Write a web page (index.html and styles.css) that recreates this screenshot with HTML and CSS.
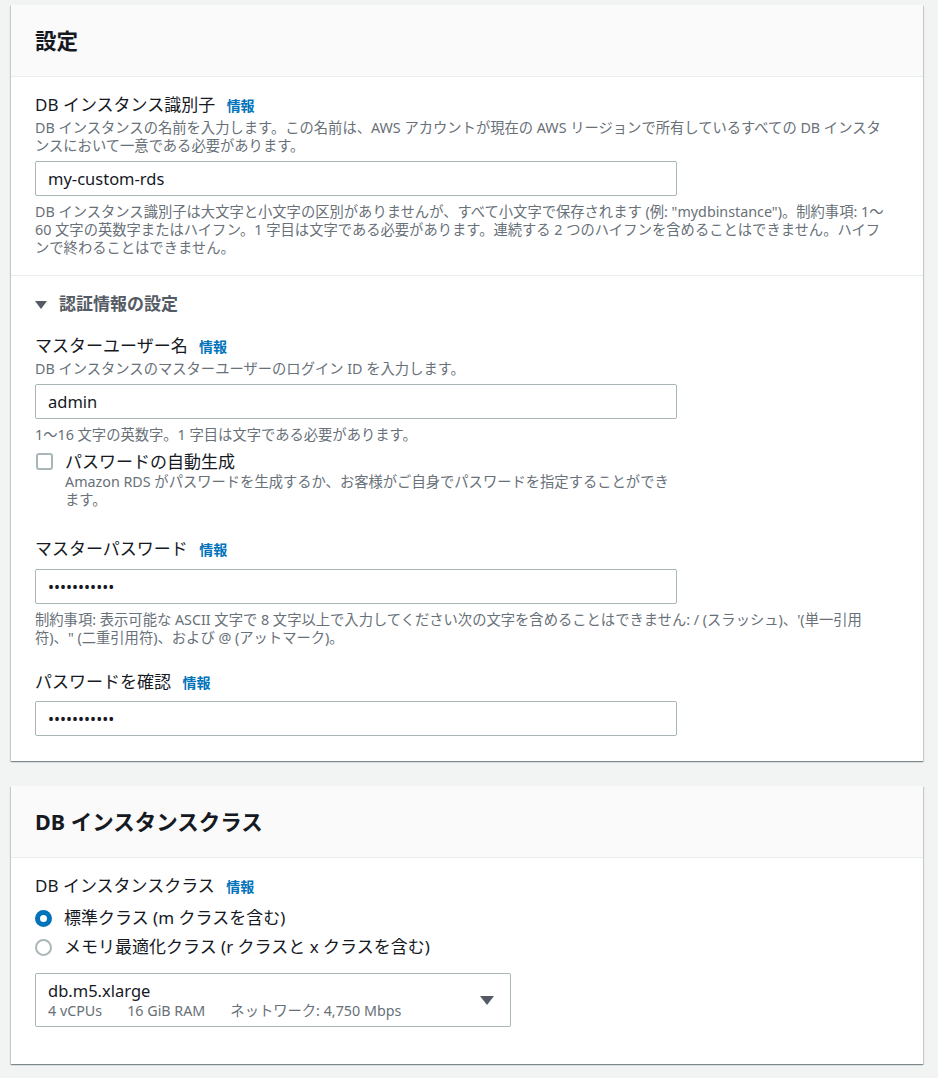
FILE: index.html
```html
<!DOCTYPE html>
<html lang="ja">
<head>
<meta charset="utf-8">
<title>設定</title>
<link rel="stylesheet" href="styles.css">
</head>
<body>
<main class="page">

  <section class="card">
    <header class="card-header">
      <h2 class="card-title">設定</h2>
    </header>

    <div class="card-section">
      <div class="field">
        <div class="field-label">DB インスタンス識別子 <a class="info" href="#">情報</a></div>
        <p class="field-desc">DB インスタンスの名前を入力します。この名前は、AWS アカウントが現在の AWS リージョンで所有しているすべての DB インスタ<br>ンスにおいて一意である必要があります。</p>
        <input class="text-input" type="text" value="my-custom-rds">
        <p class="field-hint">DB インスタンス識別子は大文字と小文字の区別がありませんが、すべて小文字で保存されます (例: "mydbinstance")。制約事項: 1～<br>60 文字の英数字またはハイフン。1 字目は文字である必要があります。連続する 2 つのハイフンを含めることはできません。ハイフ<br>ンで終わることはできません。</p>
      </div>
    </div>

    <div class="card-section card-section--last">
      <div class="expander">
        <span class="caret-down"></span>
        <span class="expander-title">認証情報の設定</span>
      </div>

      <div class="field field--first">
        <div class="field-label">マスターユーザー名 <a class="info" href="#">情報</a></div>
        <p class="field-desc">DB インスタンスのマスターユーザーのログイン ID を入力します。</p>
        <input class="text-input" type="text" value="admin">
        <p class="field-hint">1～16 文字の英数字。1 字目は文字である必要があります。</p>
        <label class="checkbox">
          <span class="checkbox-box"></span>
          <span class="checkbox-text">
            <span class="checkbox-label">パスワードの自動生成</span>
            <span class="checkbox-desc">Amazon RDS がパスワードを生成するか、お客様がご自身でパスワードを指定することができ<br>ます。</span>
          </span>
        </label>
      </div>

      <div class="field field--after-check">
        <div class="field-label">マスターパスワード <a class="info" href="#">情報</a></div>
        <input class="text-input text-input--secret" type="password" value="Passw0rd123">
        <p class="field-hint">制約事項: 表示可能な ASCII 文字で 8 文字以上で入力してください次の文字を含めることはできません: / (スラッシュ)、'(単一引用<br>符)、" (二重引用符)、および @ (アットマーク)。</p>
      </div>

      <div class="field field--spaced">
        <div class="field-label">パスワードを確認 <a class="info" href="#">情報</a></div>
        <input class="text-input text-input--secret text-input--tight" type="password" value="Passw0rd123">
      </div>
    </div>
  </section>

  <section class="card card--second">
    <header class="card-header">
      <h2 class="card-title">DB インスタンスクラス</h2>
    </header>

    <div class="card-section card-section--class">
      <div class="field-label">DB インスタンスクラス <a class="info" href="#">情報</a></div>
      <div class="radio-group">
        <label class="radio">
          <span class="radio-dot radio-dot--on"></span>
          <span class="radio-label">標準クラス (m クラスを含む)</span>
        </label>
        <label class="radio">
          <span class="radio-dot"></span>
          <span class="radio-label">メモリ最適化クラス (r クラスと x クラスを含む)</span>
        </label>
      </div>

      <div class="select">
        <div class="select-value">
          <div class="select-main">db.m5.xlarge</div>
          <div class="select-tags">
            <span>4 vCPUs</span>
            <span>16 GiB RAM</span>
            <span>ネットワーク: 4,750 Mbps</span>
          </div>
        </div>
        <span class="select-caret"></span>
      </div>
    </div>
  </section>

</main>
</body>
</html>
```
FILE: styles.css
```css
* {
  box-sizing: border-box;
}

html, body {
  margin: 0;
  background: #f2f3f3;
}

body {
  font-family: "Noto Sans", "Noto Sans CJK JP", sans-serif;
  color: #16191f;
  padding: 5px 15px 15px 11px;
}

p {
  margin: 0;
}

/* Cards */
.card {
  background: #fff;
  box-shadow: 0 1px 1px 0 rgba(0, 28, 36, 0.3),
              1px 1px 1px 0 rgba(0, 28, 36, 0.15),
              -1px 1px 1px 0 rgba(0, 28, 36, 0.15);
}

.card--second {
  margin-top: 25px;
}

.card-header {
  height: 72px;
  display: flex;
  align-items: center;
  padding: 0 24px;
  background: #fafafa;
  border-bottom: 1px solid #eaeded;
}

.card-title {
  margin: 0;
  font-size: 21.5px;
  line-height: 28px;
  font-weight: 700;
  color: #16191f;
}

.card-section {
  padding: 17px 24px 18px 24px;
  border-bottom: 1px solid #eaeded;
}

.card-section--last {
  padding-top: 17px;
  padding-bottom: 25px;
  border-bottom: none;
}

.card-section--class {
  padding-top: 17px;
  padding-bottom: 37px;
  border-bottom: none;
}

/* Form fields */
.field--first {
  margin-top: 20px;
}

.field--after-check {
  margin-top: 29px;
}

.field--spaced {
  margin-top: 24px;
}

.field-label {
  font-size: 17px;
  line-height: 22px;
  color: #16191f;
}

.info {
  margin-left: 7px;
  font-size: 14px;
  font-weight: 700;
  color: #0073bb;
  text-decoration: none;
}

.field-desc {
  margin-top: 2px;
  font-size: 14.3px;
  line-height: 18px;
  color: #687078;
}

.field-hint {
  margin-top: 7px;
  font-size: 14.3px;
  line-height: 18px;
  color: #687078;
}

.text-input {
  display: block;
  width: 642px;
  height: 35px;
  margin-top: 6px;
  padding: 0 12px;
  border: 1px solid #aab7b8;
  border-radius: 2px;
  background: #fff;
  font-family: "Noto Sans", "Noto Sans CJK JP", sans-serif;
  font-size: 16.5px;
  color: #16191f;
  outline: none;
}

.field-label + .text-input {
  margin-top: 8px;
}

.field-label + .text-input--tight {
  margin-top: 7px;
}

.text-input--secret {
  font-size: 16px;
  letter-spacing: 0;
}

/* Expandable section heading */
.expander {
  display: flex;
  align-items: center;
  height: 22px;
}

.caret-down {
  width: 0;
  height: 0;
  border-left: 6px solid transparent;
  border-right: 6px solid transparent;
  border-top: 8px solid #545b64;
  margin-right: 12px;
  margin-top: 1px;
}

.expander-title {
  font-size: 17px;
  line-height: 22px;
  font-weight: 700;
  color: #545b64;
}

/* Checkbox */
.checkbox {
  display: flex;
  align-items: flex-start;
  width: 642px;
  margin-top: 6px;
}

.checkbox-box {
  flex: none;
  width: 17px;
  height: 17px;
  margin: 3px 12px 0 1px;
  border: 2px solid #aab7b8;
  border-radius: 3px;
  background: #fff;
}

.checkbox-text {
  display: flex;
  flex-direction: column;
}

.checkbox-label {
  font-size: 17px;
  line-height: 23px;
}

.checkbox-desc {
  font-size: 14.3px;
  line-height: 18px;
  color: #687078;
}

/* Radio group */
.radio-group {
  display: flex;
  flex-direction: column;
  gap: 7px;
  margin-top: 9px;
}

.radio {
  display: flex;
  align-items: center;
  height: 22px;
}

.radio-dot {
  flex: none;
  width: 17px;
  height: 17px;
  margin-right: 12px;
  border-radius: 50%;
  border: 2px solid #aab7b8;
  background: #fff;
}

.radio-dot--on {
  border: 5px solid #0073bb;
}

.radio-label {
  font-size: 17px;
  line-height: 22px;
}

/* Select */
.select {
  display: flex;
  align-items: center;
  width: 476px;
  height: 54px;
  margin-top: 15px;
  padding: 5px 16px 5px 12px;
  border: 1px solid #aab7b8;
  border-radius: 2px;
  background: #fff;
}

.select-value {
  flex: 1;
}

.select-main {
  font-size: 16.5px;
  line-height: 22px;
}

.select-tags {
  display: flex;
  gap: 25px;
  font-size: 14.3px;
  line-height: 18px;
  color: #687078;
}

.select-caret {
  width: 0;
  height: 0;
  border-left: 7px solid transparent;
  border-right: 7px solid transparent;
  border-top: 9px solid #545b64;
}
```
